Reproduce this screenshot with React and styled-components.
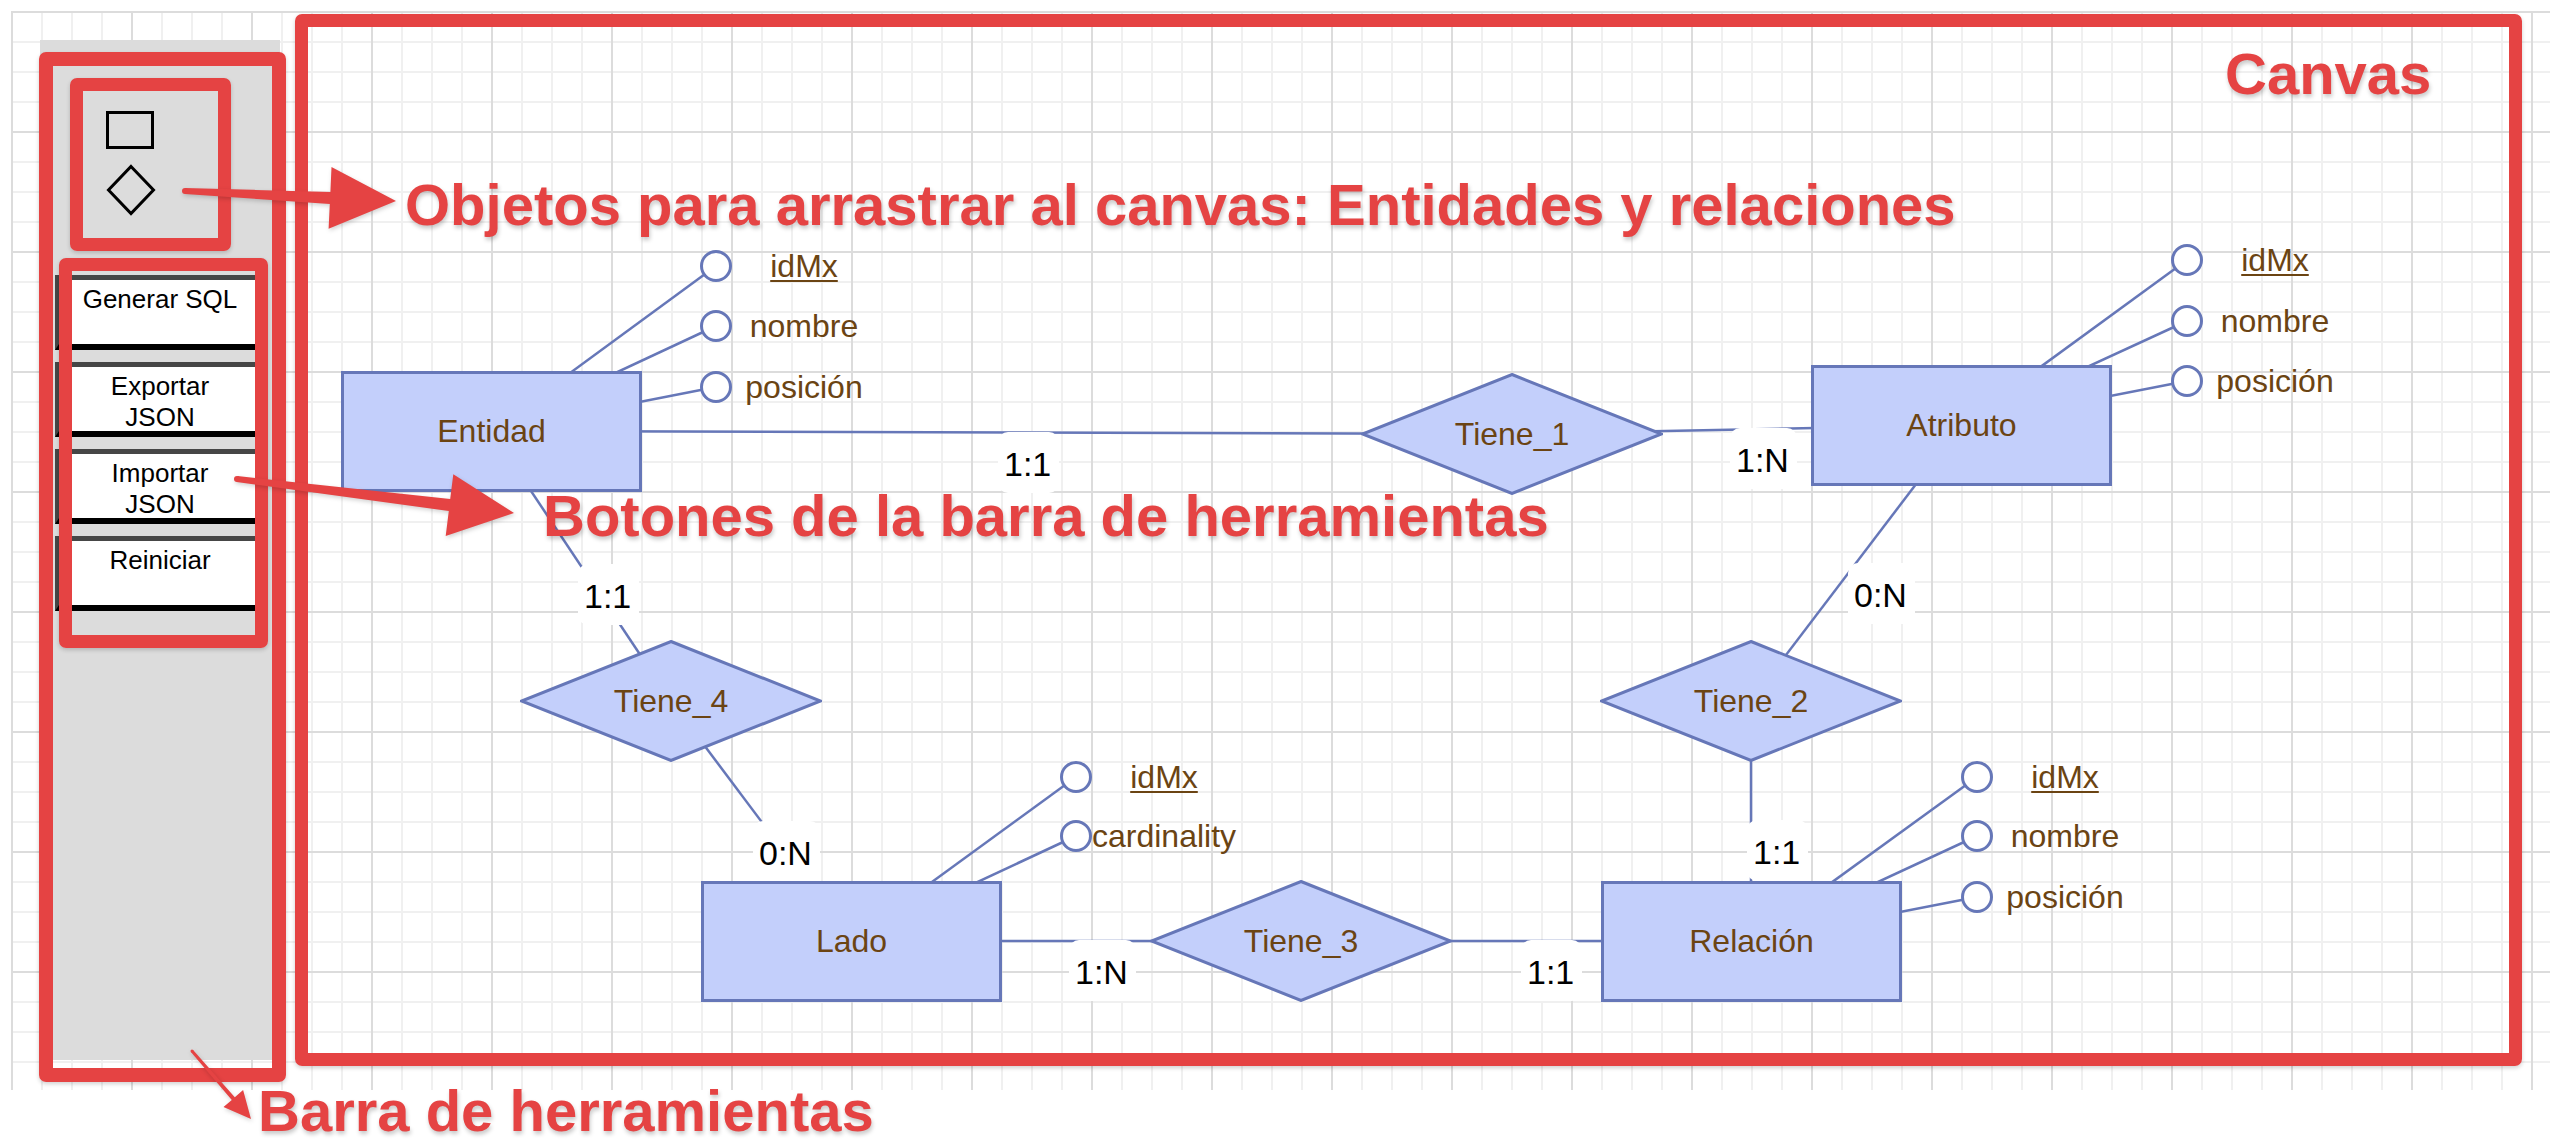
import React from 'react';
import styled, { createGlobalStyle } from 'styled-components';

const RED = '#e54343';
const LINE = '#6677b8';
const FILL = '#c3cffb';
const BROWN = '#6b4413';

const GlobalStyle = createGlobalStyle`
  html, body { margin: 0; padding: 0; background: #fff; }
  body { font-family: "Liberation Sans", Arial, Helvetica, sans-serif; }
  #root { width: 2550px; height: 1148px; }
`;

const Page = styled.div`
  position: relative;
  width: 2550px;
  height: 1148px;
  padding: 11px 0 0 11px;
  box-sizing: border-box;
  overflow: hidden;
  background: #fff;
`;

const GridArea = styled.div`
  height: 1079px;
  box-sizing: border-box;
  padding: 29px 0 0 29px;
  display: flex;
  align-items: flex-start;
  background-color: #fff;
  background-image:
    linear-gradient(to bottom, #dcdcdc 2px, transparent 2px),
    linear-gradient(to right, #dcdcdc 2px, transparent 2px),
    linear-gradient(to bottom, #f0f0f0 2px, transparent 2px),
    linear-gradient(to right, #f0f0f0 2px, transparent 2px);
  background-size: 120px 120px, 120px 120px, 30px 30px, 30px 30px;
`;

const Toolbar = styled.aside`
  width: 240px;
  height: 1020px;
  background: #dcdcdc;
  display: flex;
  flex-direction: column;
`;

const Palette = styled.div`
  display: flex;
  flex-direction: column;
  align-items: flex-start;
  gap: 15px;
  padding: 71px 0 0 66px;
`;

const RectIcon = styled.div`
  width: 48px;
  height: 38px;
  border: 3px solid #000;
  box-sizing: border-box;
`;

const DiamondIcon = styled.svg`
  display: block;
  width: 50px;
  height: 52px;
`;

const ButtonList = styled.div`
  display: flex;
  flex-direction: column;
  gap: 12px;
  margin-top: 59px;
  padding: 0 15px;
`;

const ToolButton = styled.button`
  display: flex;
  flex-direction: column;
  align-items: center;
  justify-content: flex-start;
  width: 210px;
  height: 75px;
  box-sizing: border-box;
  margin: 0;
  padding: 4px 0 0;
  background: #fff;
  border-style: solid;
  border-width: 5px 4px 6px 4px;
  border-color: #464646 #000 #000 #464646;
  border-radius: 0;
  font-family: "Liberation Sans", Arial, sans-serif;
  font-size: 26px;
  line-height: 31px;
  color: #000;
  text-align: center;
`;

/* ---------- diagram ---------- */

const DiagramLayer = styled.div`
  position: absolute;
  left: 0;
  top: 0;
  width: 2550px;
  height: 1148px;
  pointer-events: none;
`;

const Connectors = styled.svg`
  position: absolute;
  left: 0;
  top: 0;
`;

const EntityBox = styled.div`
  position: absolute;
  left: ${p => p.$cx - 150}px;
  top: ${p => p.$cy - 60}px;
  width: 301px;
  height: 121px;
  box-sizing: border-box;
  border: 3px solid ${LINE};
  background: ${FILL};
  display: flex;
  align-items: center;
  justify-content: center;
  font-size: 32px;
  color: ${BROWN};
`;

const RelationNode = styled.div`
  position: absolute;
  left: ${p => p.$cx - 151}px;
  top: ${p => p.$cy - 61}px;
  width: 302px;
  height: 122px;
  display: flex;
  align-items: center;
  justify-content: center;
`;

const DiamondShape = styled.svg`
  position: absolute;
  left: 0;
  top: 0;
`;

const NodeText = styled.span`
  position: relative;
  font-size: 32px;
  color: ${BROWN};
  white-space: nowrap;
`;

const AttrNode = styled.div`
  position: absolute;
  left: ${p => p.$cx - 16}px;
  top: ${p => p.$cy - 16}px;
  height: 32px;
  display: flex;
  align-items: center;
`;

const AttrCircle = styled.div`
  width: 32px;
  height: 32px;
  box-sizing: border-box;
  border: 3px solid ${LINE};
  border-radius: 50%;
  background: #fff;
`;

const AttrLabel = styled.span`
  width: 144px;
  display: flex;
  justify-content: center;
  white-space: nowrap;
  font-size: 32px;
  line-height: 32px;
  color: ${BROWN};
  text-decoration: ${p => (p.$key ? 'underline' : 'none')};
  text-decoration-thickness: 2px;
  text-underline-offset: 3px;
`;

const CardLabel = styled.div`
  position: absolute;
  left: ${p => p.$x - 9}px;
  top: ${p => p.$y - 20}px;
  padding: 10px 8px 7px 6px;
  background: #fff;
  border-radius: 10px;
  font-size: 34px;
  line-height: 44px;
  color: #000;
  white-space: nowrap;
`;

/* ---------- annotations ---------- */

const AnnotationLayer = styled.div`
  position: absolute;
  left: 0;
  top: 0;
  width: 2550px;
  height: 1148px;
  pointer-events: none;
`;

const RedFrame = styled.div`
  position: absolute;
  left: ${p => p.$x}px;
  top: ${p => p.$y}px;
  width: ${p => p.$w}px;
  height: ${p => p.$h}px;
  box-sizing: border-box;
  border: ${p => p.$t || 14}px solid ${RED};
  border-radius: 7px;
  box-shadow: 0 2px 4px rgba(0, 0, 0, 0.18);
`;

const RedLabel = styled.div`
  position: absolute;
  left: ${p => p.$x}px;
  top: ${p => p.$y}px;
  font-family: "Liberation Sans", Arial, Helvetica, sans-serif;
  font-weight: bold;
  font-size: 58px;
  line-height: 58px;
  color: ${RED};
  white-space: nowrap;
  text-shadow: 1px 3px 4px rgba(0, 0, 0, 0.22);
`;

const ArrowSvg = styled.svg`
  position: absolute;
  left: 0;
  top: 0;
  filter: drop-shadow(1px 2px 2px rgba(0, 0, 0, 0.18));
`;

/* ---------- data ---------- */

const entities = [
  { id: 'E', name: 'Entidad', cx: 491, cy: 431 },
  { id: 'A', name: 'Atributo', cx: 1961, cy: 425 },
  { id: 'L', name: 'Lado', cx: 851, cy: 941 },
  { id: 'R', name: 'Relación', cx: 1751, cy: 941 },
];

const relations = [
  { id: 'T1', name: 'Tiene_1', cx: 1512, cy: 434 },
  { id: 'T2', name: 'Tiene_2', cx: 1751, cy: 701 },
  { id: 'T3', name: 'Tiene_3', cx: 1301, cy: 941 },
  { id: 'T4', name: 'Tiene_4', cx: 671, cy: 701 },
];

const attributes = [
  { owner: 'E', name: 'idMx', key: true, cx: 716, cy: 266 },
  { owner: 'E', name: 'nombre', cx: 716, cy: 326 },
  { owner: 'E', name: 'posición', cx: 716, cy: 387 },
  { owner: 'A', name: 'idMx', key: true, cx: 2187, cy: 260 },
  { owner: 'A', name: 'nombre', cx: 2187, cy: 321 },
  { owner: 'A', name: 'posición', cx: 2187, cy: 381 },
  { owner: 'L', name: 'idMx', key: true, cx: 1076, cy: 777 },
  { owner: 'L', name: 'cardinality', cx: 1076, cy: 836 },
  { owner: 'R', name: 'idMx', key: true, cx: 1977, cy: 777 },
  { owner: 'R', name: 'nombre', cx: 1977, cy: 836 },
  { owner: 'R', name: 'posición', cx: 1977, cy: 897 },
];

const links = [
  ['E', 'T1'], ['T1', 'A'], ['A', 'T2'], ['T2', 'R'],
  ['R', 'T3'], ['T3', 'L'], ['L', 'T4'], ['T4', 'E'],
];

const cardinalities = [
  { text: '1:1', x: 1007, y: 452 },
  { text: '1:N', x: 1739, y: 448 },
  { text: '0:N', x: 1857, y: 583 },
  { text: '1:1', x: 1756, y: 840 },
  { text: '1:1', x: 587, y: 584 },
  { text: '0:N', x: 762, y: 841 },
  { text: '1:N', x: 1078, y: 960 },
  { text: '1:1', x: 1530, y: 960 },
];

const nodeById = {};
[...entities, ...relations].forEach(n => { nodeById[n.id] = n; });

function arrowPoints(s, t, headLen, headHalf, tailHalf, neckHalf) {
  const dx = t[0] - s[0];
  const dy = t[1] - s[1];
  const len = Math.hypot(dx, dy);
  const ux = dx / len;
  const uy = dy / len;
  const nx = -uy;
  const ny = ux;
  const bx = t[0] - ux * headLen;
  const by = t[1] - uy * headLen;
  const p = [
    [s[0] + nx * tailHalf, s[1] + ny * tailHalf],
    [bx + nx * neckHalf, by + ny * neckHalf],
    [bx + nx * headHalf, by + ny * headHalf],
    [t[0], t[1]],
    [bx - nx * headHalf, by - ny * headHalf],
    [bx - nx * neckHalf, by - ny * neckHalf],
    [s[0] - nx * tailHalf, s[1] - ny * tailHalf],
  ];
  return p.map(q => `${q[0].toFixed(1)},${q[1].toFixed(1)}`).join(' ');
}

const arrows = [
  { s: [185, 191], t: [396, 201], head: 66, half: 31, tail: 3, neck: 6 },
  { s: [237, 479], t: [514, 513], head: 65, half: 31, tail: 3, neck: 6 },
  { s: [192, 1051], t: [251, 1119], head: 27, half: 13, tail: 1.5, neck: 2 },
];

function Diagram() {
  return (
    <DiagramLayer>
      <Connectors width="2550" height="1148">
        <g stroke={LINE} strokeWidth="2.5" fill="none">
          {links.map(([a, b], i) => (
            <line key={i} x1={nodeById[a].cx} y1={nodeById[a].cy} x2={nodeById[b].cx} y2={nodeById[b].cy} />
          ))}
          {attributes.map((at, i) => (
            <line key={`a${i}`} x1={nodeById[at.owner].cx} y1={nodeById[at.owner].cy} x2={at.cx} y2={at.cy} />
          ))}
        </g>
      </Connectors>

      {cardinalities.map((c, i) => (
        <CardLabel key={`c${i}`} $x={c.x} $y={c.y}>{c.text}</CardLabel>
      ))}

      {entities.map(e => (
        <EntityBox key={e.id} $cx={e.cx} $cy={e.cy}>{e.name}</EntityBox>
      ))}

      {relations.map(r => (
        <RelationNode key={r.id} $cx={r.cx} $cy={r.cy}>
          <DiamondShape width="302" height="122" viewBox="0 0 302 122">
            <polygon points="151,1.5 300.5,61 151,120.5 1.5,61" fill={FILL} stroke={LINE} strokeWidth="3" strokeLinejoin="miter" />
          </DiamondShape>
          <NodeText>{r.name}</NodeText>
        </RelationNode>
      ))}

      {attributes.map((at, i) => (
        <AttrNode key={`n${i}`} $cx={at.cx} $cy={at.cy}>
          <AttrCircle />
          <AttrLabel $key={at.key}>{at.name}</AttrLabel>
        </AttrNode>
      ))}
    </DiagramLayer>
  );
}

function Annotations() {
  return (
    <AnnotationLayer>
      <RedFrame $x={295} $y={14} $w={2227} $h={1052} $t={13} />
      <RedFrame $x={39} $y={52} $w={247} $h={1030} />
      <RedFrame $x={70} $y={78} $w={161} $h={173} $t={13} />
      <RedFrame $x={59} $y={258} $w={209} $h={390} $t={13} />

      <ArrowSvg width="2550" height="1148">
        {arrows.map((a, i) => (
          <g key={i} fill={RED}>
            <polygon points={arrowPoints(a.s, a.t, a.head, a.half, a.tail, a.neck)} />
            <circle cx={a.s[0]} cy={a.s[1]} r={a.tail} />
          </g>
        ))}
      </ArrowSvg>

      <RedLabel $x={2225} $y={45}>Canvas</RedLabel>
      <RedLabel $x={405} $y={176}>Objetos para arrastrar al canvas: Entidades y relaciones</RedLabel>
      <RedLabel $x={543} $y={487}>Botones de la barra de herramientas</RedLabel>
      <RedLabel $x={258} $y={1082}>Barra de herramientas</RedLabel>
    </AnnotationLayer>
  );
}

export default function App() {
  return (
    <>
      <GlobalStyle />
      <Page>
        <GridArea>
          <Toolbar>
            <Palette>
              <RectIcon title="Entidad" />
              <DiamondIcon viewBox="0 0 50 52">
                <polygon points="25,2.5 47.5,26 25,49.5 2.5,26" fill="none" stroke="#000" strokeWidth="3" />
              </DiamondIcon>
            </Palette>
            <ButtonList>
              <ToolButton>Generar SQL</ToolButton>
              <ToolButton>Exportar<br />JSON</ToolButton>
              <ToolButton>Importar<br />JSON</ToolButton>
              <ToolButton>Reiniciar</ToolButton>
            </ButtonList>
          </Toolbar>
        </GridArea>
        <Diagram />
        <Annotations />
      </Page>
    </>
  );
}
